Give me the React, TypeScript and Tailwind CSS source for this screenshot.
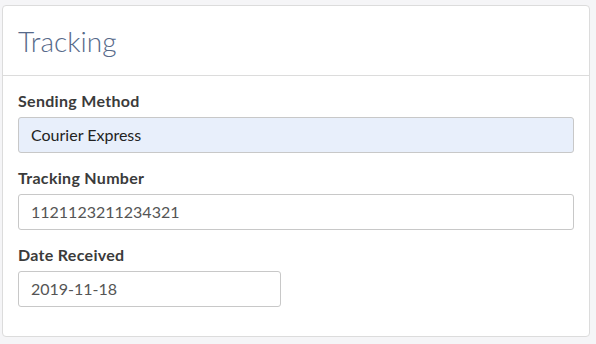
export default function App() {
  return (
    <div className="min-h-screen bg-[#f5f5f7] pt-[5px] pl-[2px]" style={{ fontFamily: "Lato, 'Open Sans', sans-serif" }}>
      <div className="w-[588px] h-[332px] bg-white border border-[#dcdcdc] rounded-[4px]">
        {/* Header */}
        <div className="h-[70px] border-b border-[#dcdcdc] px-[15px] flex items-center">
          <h1 className="text-[28px] font-light text-[#56698a] leading-none">Tracking</h1>
        </div>

        {/* Body */}
        <div className="px-[15px] pt-[15px]">
          <label className="block text-[16px] leading-[20px] font-bold tracking-[0.3px] text-[#3b3b3b]">Sending Method</label>
          <div className="mt-[6px] h-[36px] rounded-[3px] border border-[#c8c8c8] bg-[#e8effb] px-[12px] flex items-center text-[16px] text-[#222]">
            Courier Express
          </div>

          <label className="block mt-[15px] text-[16px] leading-[20px] font-bold tracking-[0.3px] text-[#3b3b3b]">Tracking Number</label>
          <div className="mt-[6px] h-[36px] rounded-[3px] border border-[#c8c8c8] bg-white px-[12px] flex items-center text-[16px] text-[#555]">
            1121123211234321
          </div>

          <label className="block mt-[15px] text-[16px] leading-[20px] font-bold tracking-[0.3px] text-[#3b3b3b]">Date Received</label>
          <div className="mt-[6px] h-[36px] w-[263px] rounded-[3px] border border-[#c8c8c8] bg-white px-[12px] flex items-center text-[16px] text-[#555]">
            2019-11-18
          </div>
        </div>
      </div>
    </div>
  );
}
